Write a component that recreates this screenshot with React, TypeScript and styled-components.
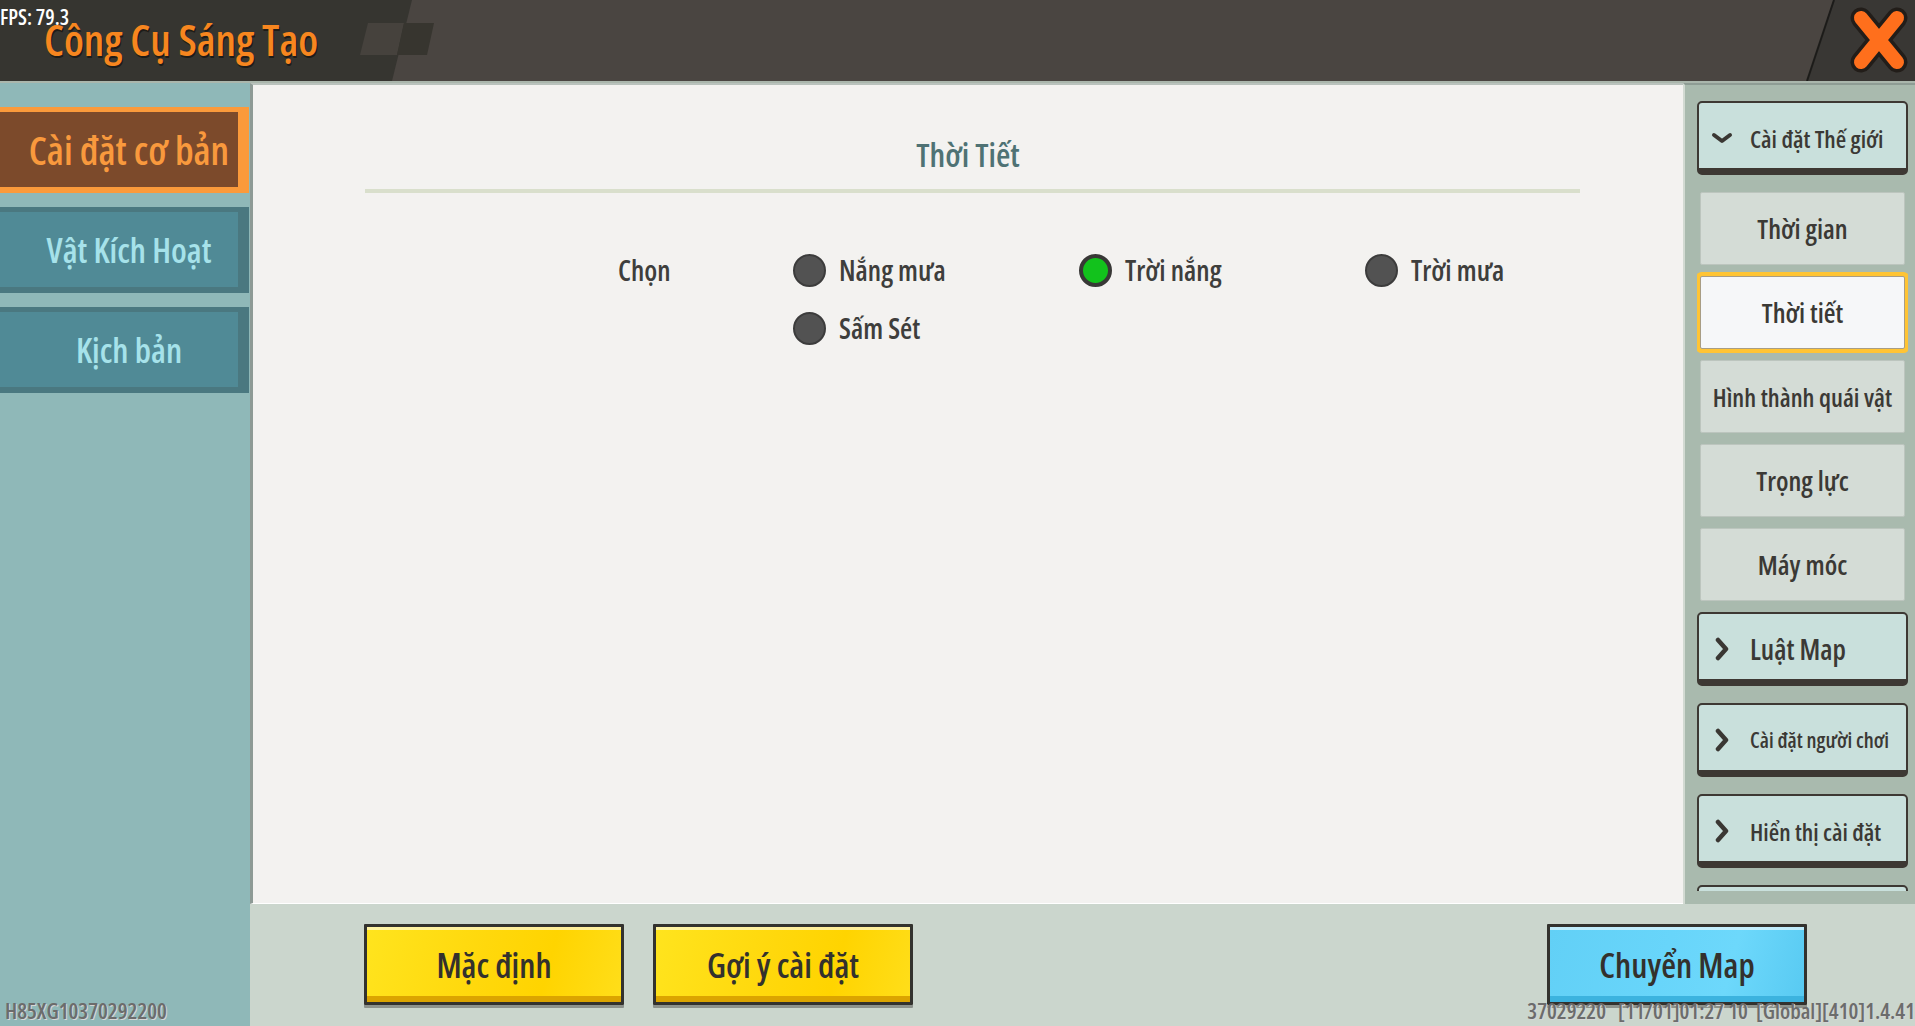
import * as React from 'react';
import styled, { createGlobalStyle } from 'styled-components';

const GlobalStyle = createGlobalStyle`
  html, body {
    margin: 0;
    padding: 0;
    overflow: hidden;
    background: #363530;
  }
  body {
    font-family: 'Open Sans', 'Noto Sans', sans-serif;
    font-stretch: 75%;
  }
  * {
    box-sizing: border-box;
  }
`;

const Screen = styled.div`
  position: relative;
  width: 1915px;
  height: 1026px;
  display: grid;
  grid-template-rows: 83px 1fr;
  overflow: hidden;
`;

const Header = styled.header`
  position: relative;
  display: flex;
  align-items: center;
  justify-content: space-between;
  padding: 0 6px 6px 44px;
  border-bottom: 2px solid #aab6ac;
`;

const HeaderArt = styled.svg`
  position: absolute;
  inset: 0;
  z-index: 0;
`;

const Title = styled.h1`
  position: relative;
  margin: 4px 0 0;
  font-size: 43px;
  font-weight: 600;
  color: #f7861f;
  text-shadow: 1px 2px 0 #1e1c18;
`;

const CloseBtn = styled.button`
  position: relative;
  width: 60px;
  height: 66px;
  padding: 0;
  border: none;
  background: none;
  margin-top: 4px;
`;

const Fps = styled.span`
  position: absolute;
  top: 3px;
  left: 0;
  z-index: 2;
  font-size: 21px;
  font-weight: 600;
  color: #fff;
`;

const Body = styled.div`
  display: grid;
  grid-template-columns: 250px 1fr;
`;

const Sidebar = styled.nav`
  background: #8fb8b8;
  padding-top: 24px;
  display: flex;
  flex-direction: column;
  gap: 14px;
`;

const Tab = styled.div<{ $active?: boolean }>`
  width: 249px;
  height: 86px;
  display: flex;
  align-items: center;
  justify-content: center;
  padding-left: 20px;
  font-size: ${({ $active }) => ($active ? 39 : 34)}px;
  font-weight: 600;
  color: ${({ $active }) => ($active ? '#f9993d' : '#a6e2ea')};
  background: ${({ $active }) => ($active ? '#7c4a2b' : '#508a96')};
  border-style: solid;
  border-color: ${({ $active }) => ($active ? '#fb9a3b' : '#4a7880')};
  border-width: 5px 11px 6px 0;
`;

const Workspace = styled.div`
  display: grid;
  grid-template-rows: 821px 1fr;
`;

const Upper = styled.div`
  display: grid;
  grid-template-columns: 1fr 232px;
  min-height: 0;
`;

const Panel = styled.section`
  background: #f3f2f0;
  border-left: 3px solid #8d9a95;
  border-top: 2px solid #b9c2bc;
  border-bottom: 1px solid #ffffff;
  display: flex;
  flex-direction: column;
`;

const PanelTitle = styled.h2`
  margin: 50px 0 0;
  text-align: center;
  font-size: 33px;
  line-height: 40px;
  font-weight: 600;
  color: #4f7274;
`;

const Divider = styled.hr`
  margin: 14px 103px 0 112px;
  height: 4px;
  border: none;
  background: #d9dfcc;
`;

const OptionGrid = styled.div`
  display: grid;
  grid-template-columns: 175px repeat(3, 286px);
  grid-auto-rows: 58px;
  margin-top: 48px;
  padding-left: 365px;
  align-items: center;
`;

const RowLabel = styled.span`
  grid-row: span 2;
  align-self: start;
  line-height: 58px;
  font-size: 28px;
  font-weight: 600;
  color: #3e3e3c;
`;

const Option = styled.label`
  display: flex;
  align-items: center;
  gap: 13px;
  font-size: 28px;
  font-weight: 600;
  color: #3e3e3c;
`;

const Radio = styled.span<{ $on?: boolean }>`
  width: 33px;
  height: 33px;
  border-radius: 50%;
  background: ${({ $on }) => ($on ? '#12c21c' : '#525252')};
  border: ${({ $on }) => ($on ? '4px solid #383836' : '2px solid #3c3c3c')};
`;

const SettingsPanel = styled.aside`
  background: #a9baae;
  border-left: 2px solid #d2dad2;
  border-top: 2px solid #8e9c94;
  padding: 16px 7px 13px 12px;
  display: flex;
  flex-direction: column;
  min-height: 0;
`;

const SettingsList = styled.div`
  flex: 1;
  overflow: hidden;
  display: flex;
  flex-direction: column;
  gap: 11px;
`;

const GroupHead = styled.div<{ $size?: number }>`
  flex: none;
  height: 74px;
  margin-bottom: 6px;
  display: flex;
  align-items: center;
  gap: 16px;
  padding: 5px 0 0 11px;
  background: #c9e0dc;
  border: 2px solid #3d3833;
  border-bottom-width: 7px;
  border-radius: 5px;
  font-size: ${({ $size }) => $size ?? 24}px;
  font-weight: 600;
  color: #3b3935;
  white-space: nowrap;
`;

const IconSlot = styled.span`
  width: 24px;
  display: flex;
  justify-content: center;
`;

const SubItem = styled.div<{ $size?: number; $selected?: boolean }>`
  flex: none;
  height: 73px;
  margin: 0 3px;
  display: flex;
  align-items: center;
  justify-content: center;
  font-size: ${({ $size }) => $size ?? 27}px;
  font-weight: 600;
  color: #3b3935;
  white-space: nowrap;
  background: ${({ $selected }) => ($selected ? '#f6f7f9' : '#d4dcd6')};
  border: 1px solid ${({ $selected }) => ($selected ? '#a89d85' : '#bcc5be')};
  border-radius: 2px;
  box-shadow: ${({ $selected }) => ($selected ? '0 0 0 4px #ffc434' : 'none')};
`;

const BottomBar = styled.footer`
  background: #cbd6cd;
  display: flex;
  align-items: flex-start;
  gap: 29px;
  padding: 20px 108px 0 114px;
`;

const GameButton = styled.button<{ $tone: 'yellow' | 'blue'; $push?: boolean }>`
  width: 260px;
  height: 81px;
  margin-left: ${({ $push }) => ($push ? 'auto' : '0')};
  border: 3px solid #33322e;
  border-radius: 1px;
  font-family: inherit;
  font-stretch: 75%;
  font-size: 34px;
  font-weight: 600;
  color: #33312d;
  box-shadow: 0 3px 0 #8d928c, inset 0 3px 0 rgba(255, 255, 255, 0.6),
    inset 0 -6px 0 ${({ $tone }) => ($tone === 'yellow' ? '#dba400' : '#3cb3df')};
  background: ${({ $tone }) =>
    $tone === 'yellow'
      ? 'linear-gradient(105deg, #ffe41e 0%, #ffd80c 45%, #ffd400 70%, #ffde1a 100%)'
      : 'linear-gradient(105deg, #62d0f6 0%, #68d5fa 45%, #6dd8fb 70%, #58caf2 100%)'};
`;

const DebugText = styled.span<{ $side: 'left' | 'right' }>`
  position: absolute;
  bottom: 1px;
  ${({ $side }) => ($side === 'left' ? 'left: 5px;' : 'right: 0;')}
  font-size: 22px;
  font-weight: 600;
  color: #6c6c6c;
  text-shadow: 1px 1px 0 #d6d6d6;
  white-space: pre;
`;

const ChevronDown = () => (
  <svg width="22" height="12" viewBox="0 0 22 12">
    <path d="M3 3 L11 9 L19 3" fill="none" stroke="#3a3733" strokeWidth="4" strokeLinecap="round" strokeLinejoin="round" />
  </svg>
);

const ChevronRight = () => (
  <svg width="14" height="24" viewBox="0 0 14 24">
    <path d="M3 3 L11 12 L3 21" fill="none" stroke="#3a3733" strokeWidth="4.5" strokeLinecap="round" strokeLinejoin="round" />
  </svg>
);

const CloseIcon = () => (
  <svg width="60" height="66" viewBox="0 0 60 66">
    <g strokeLinecap="round">
      <path d="M12 11 L48 55 M48 11 L12 55" stroke="#221d19" strokeWidth="21" />
      <path d="M12 11 L48 55 M48 11 L12 55" stroke="#ff6f1c" strokeWidth="14" />
    </g>
  </svg>
);

const weather = [
  { label: 'Nắng mưa', on: false },
  { label: 'Trời nắng', on: true },
  { label: 'Trời mưa', on: false },
  { label: 'Sấm Sét', on: false },
];

const App: React.FC = () => {
  return (
    <Screen>
      <GlobalStyle />
      <Header>
        <HeaderArt width="1915" height="81" viewBox="0 0 1915 81">
          <rect width="1915" height="81" fill="#363530" />
          <polygon points="412,0 1834,0 1807,81 392,81" fill="#4a4541" />
          <polygon points="1834,0 1915,0 1915,81 1807,81" fill="#393734" />
          <line x1="1834" y1="0" x2="1807" y2="81" stroke="#1c1b19" strokeWidth="2" />
          <polygon points="368,23 404,23 397,55 360,55" fill="#46423d" />
          <polygon points="404,23 434,23 427,55 397,55" fill="#37352f" />
        </HeaderArt>
        <Title>Công Cụ Sáng Tạo</Title>
        <CloseBtn aria-label="close">
          <CloseIcon />
        </CloseBtn>
      </Header>
      <Fps>FPS: 79.3</Fps>

      <Body>
        <Sidebar>
          <Tab $active>Cài đặt cơ bản</Tab>
          <Tab>Vật Kích Hoạt</Tab>
          <Tab>Kịch bản</Tab>
        </Sidebar>

        <Workspace>
          <Upper>
            <Panel>
              <PanelTitle>Thời Tiết</PanelTitle>
              <Divider />
              <OptionGrid>
                <RowLabel>Chọn</RowLabel>
                {weather.map((w) => (
                  <Option key={w.label}>
                    <Radio $on={w.on} />
                    {w.label}
                  </Option>
                ))}
              </OptionGrid>
            </Panel>

            <SettingsPanel>
              <SettingsList>
                <GroupHead $size={24}>
                  <IconSlot>
                    <ChevronDown />
                  </IconSlot>
                  Cài đặt Thế giới
                </GroupHead>
                <SubItem>Thời gian</SubItem>
                <SubItem $selected>Thời tiết</SubItem>
                <SubItem $size={25}>Hình thành quái vật</SubItem>
                <SubItem>Trọng lực</SubItem>
                <SubItem>Máy móc</SubItem>
                <GroupHead $size={28}>
                  <IconSlot>
                    <ChevronRight />
                  </IconSlot>
                  Luật Map
                </GroupHead>
                <GroupHead $size={21}>
                  <IconSlot>
                    <ChevronRight />
                  </IconSlot>
                  Cài đặt người chơi
                </GroupHead>
                <GroupHead $size={24}>
                  <IconSlot>
                    <ChevronRight />
                  </IconSlot>
                  Hiển thị cài đặt
                </GroupHead>
                {/* next group, scrolled mostly out of view */}
                <GroupHead />
              </SettingsList>
            </SettingsPanel>
          </Upper>

          <BottomBar>
            <GameButton $tone="yellow">Mặc định</GameButton>
            <GameButton $tone="yellow">Gợi ý cài đặt</GameButton>
            <GameButton $tone="blue" $push>
              Chuyển Map
            </GameButton>
          </BottomBar>
        </Workspace>
      </Body>

      <DebugText $side="left">H85XG10370292200</DebugText>
      <DebugText $side="right">{'37029220   [11/01]01:27 10  [Global][410]1.4.41'}</DebugText>
    </Screen>
  );
};

export default App;
